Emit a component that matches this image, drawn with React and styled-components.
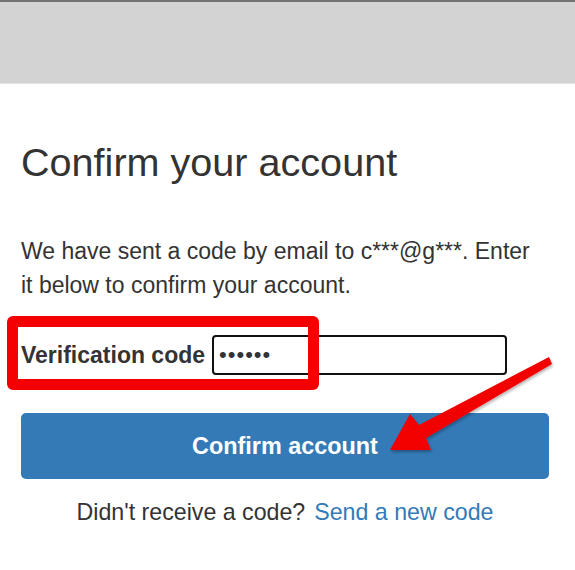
import styled, { createGlobalStyle } from 'styled-components'

const GlobalStyle = createGlobalStyle`
  * {
    box-sizing: border-box;
  }
  body {
    margin: 0;
    background: #fff;
    font-family: 'Liberation Sans', Arial, sans-serif;
    color: #333;
  }
`

const Page = styled.div`
  position: relative;
  width: 575px;
  height: 570px;
  overflow: hidden;
`

const TopBar = styled.header`
  height: 84px;
  background: #d3d3d3;
  border-top: 2px solid #727272;
  border-bottom: 1px solid #e4e4e4;
`

const Form = styled.main`
  padding: 0 26px 0 21px;
  display: flex;
  flex-direction: column;
`

const Title = styled.h1`
  margin: 55px 0 0;
  font-size: 39.6px;
  font-weight: 400;
  line-height: 47px;
  color: #333;
`

const Intro = styled.p`
  margin: 48px 0 0;
  max-width: 525px;
  font-size: 23px;
  line-height: 34px;
  color: #333;
`

const Field = styled.div`
  margin-top: 33px;
  display: flex;
  align-items: center;
  gap: 7px;
`

const Label = styled.label`
  font-size: 23px;
  font-weight: 700;
  color: #333;
`

const Input = styled.input`
  width: 295px;
  height: 40px;
  padding: 0 5px;
  border: 2px solid #111;
  border-radius: 4px;
  font-family: 'Liberation Sans', Arial, sans-serif;
  font-size: 22px;
  letter-spacing: 1px;
  color: #333;
  outline: none;
`

const ConfirmButton = styled.button`
  margin-top: 38px;
  width: 100%;
  height: 66px;
  border: none;
  border-radius: 5px;
  background: #337ab7;
  color: #fff;
  font-family: 'Liberation Sans', Arial, sans-serif;
  font-size: 23.4px;
  font-weight: 700;
`

const Resend = styled.p`
  margin: 20px 0 0;
  text-align: center;
  font-size: 23.2px;
  line-height: 26px;
  color: #333;

  a {
    margin-left: 9px;
    color: #337ab7;
    text-decoration: none;
  }
`

const Highlight = styled.div`
  position: absolute;
  left: 7px;
  top: 316px;
  width: 312px;
  height: 74px;
  border: 11px solid #f50000;
  border-radius: 6px;
  pointer-events: none;
`

const Annotation = styled.svg`
  position: absolute;
  left: 0;
  top: 0;
  pointer-events: none;
`

function App() {
  return (
    <Page>
      <GlobalStyle />
      <TopBar />
      <Form>
        <Title>Confirm your account</Title>
        <Intro>
          We have sent a code by email to c***@g***. Enter it below to confirm
          your account.
        </Intro>
        <Field>
          <Label htmlFor="code">Verification code</Label>
          <Input id="code" type="password" defaultValue="123456" />
        </Field>
        <ConfirmButton type="button">Confirm account</ConfirmButton>
        <Resend>
          Didn't receive a code?<a href="#">Send a new code</a>
        </Resend>
      </Form>
      <Highlight />
      <Annotation width="575" height="570" viewBox="0 0 575 570">
        <defs>
          <filter id="shadow" x="-10%" y="-10%" width="120%" height="130%">
            <feDropShadow dx="1" dy="2" stdDeviation="1.5" floodOpacity="0.3" />
          </filter>
        </defs>
        <polygon
          points="390,450 410,414 419,425 549,357 552,364 426,438 431,450"
          fill="#f20000"
          filter="url(#shadow)"
        />
      </Annotation>
    </Page>
  )
}

export default App
